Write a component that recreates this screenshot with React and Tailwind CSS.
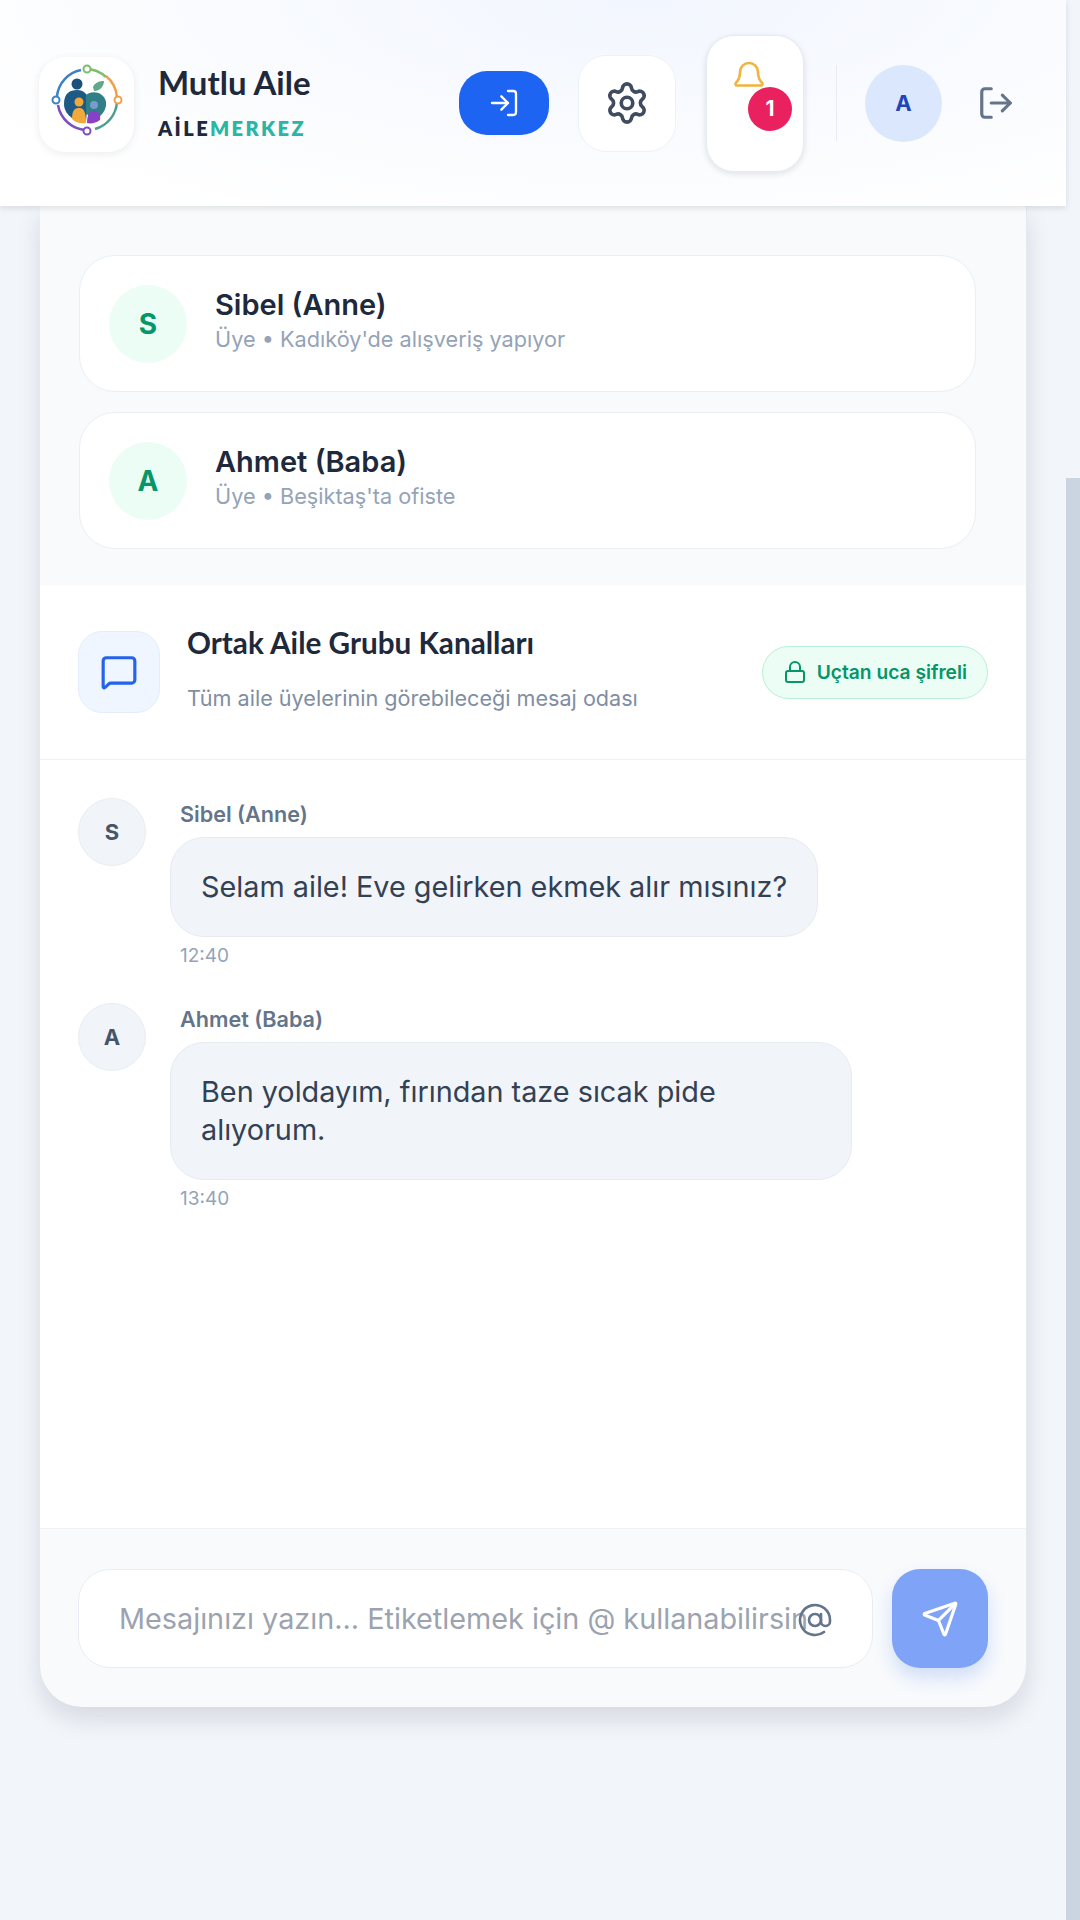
import React from 'react';
import { AtSign, Lock, LogIn, LogOut, MessageSquare, Send, Settings } from 'lucide-react';

const members = [
  { initial: 'S', name: 'Sibel (Anne)', status: "Üye • Kadıköy'de alışveriş yapıyor" },
  { initial: 'A', name: 'Ahmet (Baba)', status: "Üye • Beşiktaş'ta ofiste" },
];

function Logo() {
  return (
    <svg width="74" height="74" viewBox="0 0 74 74" fill="none" className="-mt-[8px]">
      <path d="M7 33 A30 30 0 0 1 31 7" stroke="#3b82c4" strokeWidth="2.5" />
      <path d="M33 6 A30 30 0 0 1 56 14" stroke="#7bbf6a" strokeWidth="2.5" />
      <path d="M56 13 A30 30 0 0 1 67 35" stroke="#f0a04b" strokeWidth="2.5" />
      <path d="M67 39 A30 30 0 0 1 45 66" stroke="#4f9e8f" strokeWidth="2.5" />
      <path d="M37 67 A30 30 0 0 1 8 42" stroke="#7c4fc0" strokeWidth="2.5" />
      <circle cx="37" cy="6" r="3.5" fill="#fff" stroke="#7bbf6a" strokeWidth="2" />
      <circle cx="68" cy="37" r="3.5" fill="#fff" stroke="#f0a04b" strokeWidth="2" />
      <circle cx="37" cy="68" r="3.5" fill="#fff" stroke="#7c4fc0" strokeWidth="2" />
      <circle cx="6" cy="37" r="3.5" fill="#fff" stroke="#3b82c4" strokeWidth="2" />
      <circle cx="27" cy="21" r="5.5" fill="#1d4f7c" />
      <path d="M14 41 C14 30 20 27 27 27 C34 27 38 31 38 38 L36 58 C26 60 14 52 14 41 Z" fill="#1d5a86" />
      <path d="M43 24 C45 19 50 18 54 18 C54 23 50 28 44 28 Z" fill="#5fa98a" />
      <path d="M36 32 C42 27 54 29 56 39 C57 47 51 54 43 58 L36 50 Z" fill="#2f7f86" />
      <circle cx="29" cy="39" r="4.5" fill="#f0a93a" />
      <path d="M22 56 C22 47 25 45 29 45 C33 45 36 47 36 60 C31 61 26 60 22 56 Z" fill="#f0a93a" />
      <circle cx="44" cy="42" r="4" fill="#7a9ad0" />
      <path d="M37 60 C37 51 40 48 44 48 C48 48 51 51 50 57 C46 60 41 61 37 60 Z" fill="#8a3fc7" />
    </svg>
  );
}

function Header() {
  return (
    <header className="relative z-10 flex h-[206px] shrink-0 items-center bg-[radial-gradient(ellipse_at_60%_0%,#f2f6fe,#ffffff_85%)] pl-[39px] pr-[51px] shadow-[0_2px_6px_rgba(15,23,42,0.12)]">
      <div className="mt-[2px] flex h-[95px] w-[95px] items-center justify-center rounded-[26px] bg-white shadow-[0_2px_8px_rgba(15,23,42,0.08)]">
        <Logo />
      </div>
      <div className="ml-[24px] -mt-[4px] flex flex-col font-['Lato',sans-serif]">
        <span className="text-[33px] leading-[40px] font-bold text-[#1e293b]">Mutlu Aile</span>
        <span className="mt-[13px] text-[20px] leading-[26px] font-extrabold tracking-[2.4px] text-[#1e293b]">
          AİLE<span className="text-[#2bb5a5]">MERKEZ</span>
        </span>
      </div>
      <button className="ml-auto flex h-[64px] w-[90px] items-center justify-center rounded-[28px] bg-[#1d64f2] text-white">
        <LogIn size={32} strokeWidth={1.75} />
      </button>
      <button className="ml-[29px] flex h-[97px] w-[98px] items-center justify-center rounded-[28px] border border-[#eef1f6] bg-white text-[#3f4b5e]">
        <Settings size={46} strokeWidth={1.9} />
      </button>
      <button className="relative ml-[30px] h-[137px] w-[98px] rounded-[28px] border border-[#e8ebf0] bg-white shadow-[0_2px_6px_rgba(15,23,42,0.12)]">
        {/* the clapper of the bell is hidden by the badge, so it is left out */}
        <svg width="36" height="36" viewBox="0 0 24 24" fill="none" stroke="#f0b43c" strokeWidth="1.75" strokeLinecap="round" strokeLinejoin="round" className="absolute left-[24px] top-[24px]">
          <path d="M3.262 15.326A1 1 0 0 0 4 17h16a1 1 0 0 0 .74-1.673C19.41 13.956 18 12.499 18 8A6 6 0 0 0 6 8c0 4.499-1.411 5.956-2.738 7.326" />
        </svg>
        <span className="absolute left-[41px] top-[51px] flex h-[44px] w-[44px] items-center justify-center rounded-full bg-[#e9225f] text-[21px] font-bold text-white">1</span>
      </button>
      <div className="ml-[32px] h-[76px] w-px bg-[#e8ecf2]" />
      <div className="ml-[28px] flex h-[77px] w-[77px] items-center justify-center rounded-full bg-[#dbe7fd] text-[22px] font-bold text-[#2344b8]">A</div>
      <LogOut size={38} strokeWidth={2} className="ml-[35px] text-[#64748b]" />
    </header>
  );
}

function MemberCard({ initial, name, status }) {
  return (
    <div className="flex h-[137px] items-center rounded-[36px] border border-[#eaeff5] bg-white pl-[29px]">
      <div className="flex h-[78px] w-[78px] items-center justify-center rounded-full bg-[#ecfdf5] text-[28px] font-bold text-[#059669]">{initial}</div>
      <div className="ml-[28px] -mt-[7px] flex flex-col">
        <span className="text-[29px] leading-[38px] font-semibold text-[#1e293b]">{name}</span>
        <span className="text-[21.7px] leading-[30px] text-[#94a3b8]">{status}</span>
      </div>
    </div>
  );
}

function Message({ initial, name, text, time, width }) {
  return (
    <div className="flex">
      <div className="flex h-[68px] w-[68px] shrink-0 items-center justify-center rounded-full border border-[#e8edf3] bg-[#f1f5f9] text-[22px] font-bold text-[#475569]">{initial}</div>
      <div className="ml-[24px] flex flex-col">
        <span className="ml-[10px] mt-[3px] text-[21.6px] leading-[26px] font-semibold text-[#64748b]">{name}</span>
        <div className={`mt-[10px] rounded-[34px] border border-[#e6ebf2] bg-[#f1f5f9] py-[30px] pl-[30px] pr-[24px] text-[28.8px] leading-[38px] text-[#334155] ${width}`}>
          {text}
        </div>
        <span className="ml-[10px] mt-[6px] text-[19px] leading-[26px] text-[#94a3b8]">{time}</span>
      </div>
    </div>
  );
}

export default function App() {
  return (
    <div className="flex h-[1920px] w-[1080px] overflow-hidden bg-[#f2f5fa] font-['Inter',sans-serif]">
      <div className="flex w-[1066px] flex-col">
        <Header />
        <main className="flex-1 pl-[40px] pr-[39px]">
          <div className="flex h-[1501px] flex-col overflow-hidden rounded-b-[42px] border-r border-[#e6eaf0] bg-[#f8fafc] shadow-[0_12px_24px_rgba(15,23,42,0.12)]">
            <section className="flex h-[379px] shrink-0 flex-col gap-[20px] pl-[39px] pr-[50px] pt-[49px]">
              {members.map((m) => (
                <MemberCard key={m.initial} {...m} />
              ))}
            </section>
            <section className="flex h-[175px] shrink-0 items-center border-b border-[#eef1f5] bg-white pl-[38px] pr-[38px]">
              <div className="flex h-[82px] w-[82px] items-center justify-center rounded-[24px] border border-[#e4edfb] bg-[#eff6ff] text-[#2563eb]">
                <MessageSquare size={38} strokeWidth={2} />
              </div>
              <div className="ml-[27px] -mt-[7px] flex flex-col">
                <span className="font-['Lato',sans-serif] text-[29.7px] leading-[36px] font-bold text-[#1e293b]">Ortak Aile Grubu Kanalları</span>
                <span className="mt-[22px] text-[21.6px] leading-[30px] text-[#7f8ea3]">Tüm aile üyelerinin görebileceği mesaj odası</span>
              </div>
              <div className="ml-auto flex h-[53px] items-center gap-[10px] rounded-full border border-[#b7f0d6] bg-[#ecfdf5] px-[20px] text-[19.2px] font-semibold whitespace-nowrap text-[#059669]">
                <Lock size={24} strokeWidth={2} />
                Uçtan uca şifreli
              </div>
            </section>
            <section className="flex flex-1 flex-col gap-[34px] bg-white pl-[38px] pt-[38px]">
              <Message initial="S" name="Sibel (Anne)" text="Selam aile! Eve gelirken ekmek alır mısınız?" time="12:40" width="w-[648px]" />
              <Message initial="A" name="Ahmet (Baba)" text="Ben yoldayım, fırından taze sıcak pide alıyorum." time="13:40" width="w-[682px]" />
            </section>
            <footer className="flex h-[179px] shrink-0 items-start gap-[19px] border-t border-[#eef1f5] pl-[38px] pr-[38px] pt-[40px]">
              <div className="relative h-[99px] flex-1">
                <input
                  readOnly
                  placeholder="Mesajınızı yazın... Etiketlemek için @ kullanabilirsin"
                  className="h-full w-full rounded-[32px] border border-[#e8edf3] bg-white pl-[40px] pr-[40px] text-[28.8px] outline-none placeholder:text-[#9ca3af]"
                />
                <AtSign size={36} strokeWidth={1.75} className="absolute right-[40px] top-[33px] text-[#64748b]" />
              </div>
              <button className="flex h-[99px] w-[96px] items-center justify-center rounded-[28px] bg-[#7fa3f6] text-white shadow-[0_10px_18px_rgba(37,99,235,0.18)]">
                <Send size={38} strokeWidth={2} />
              </button>
            </footer>
          </div>
        </main>
      </div>
      <aside className="w-[14px] pt-[478px]">
        <div className="h-full bg-[#cbd5e1]" />
      </aside>
    </div>
  );
}
